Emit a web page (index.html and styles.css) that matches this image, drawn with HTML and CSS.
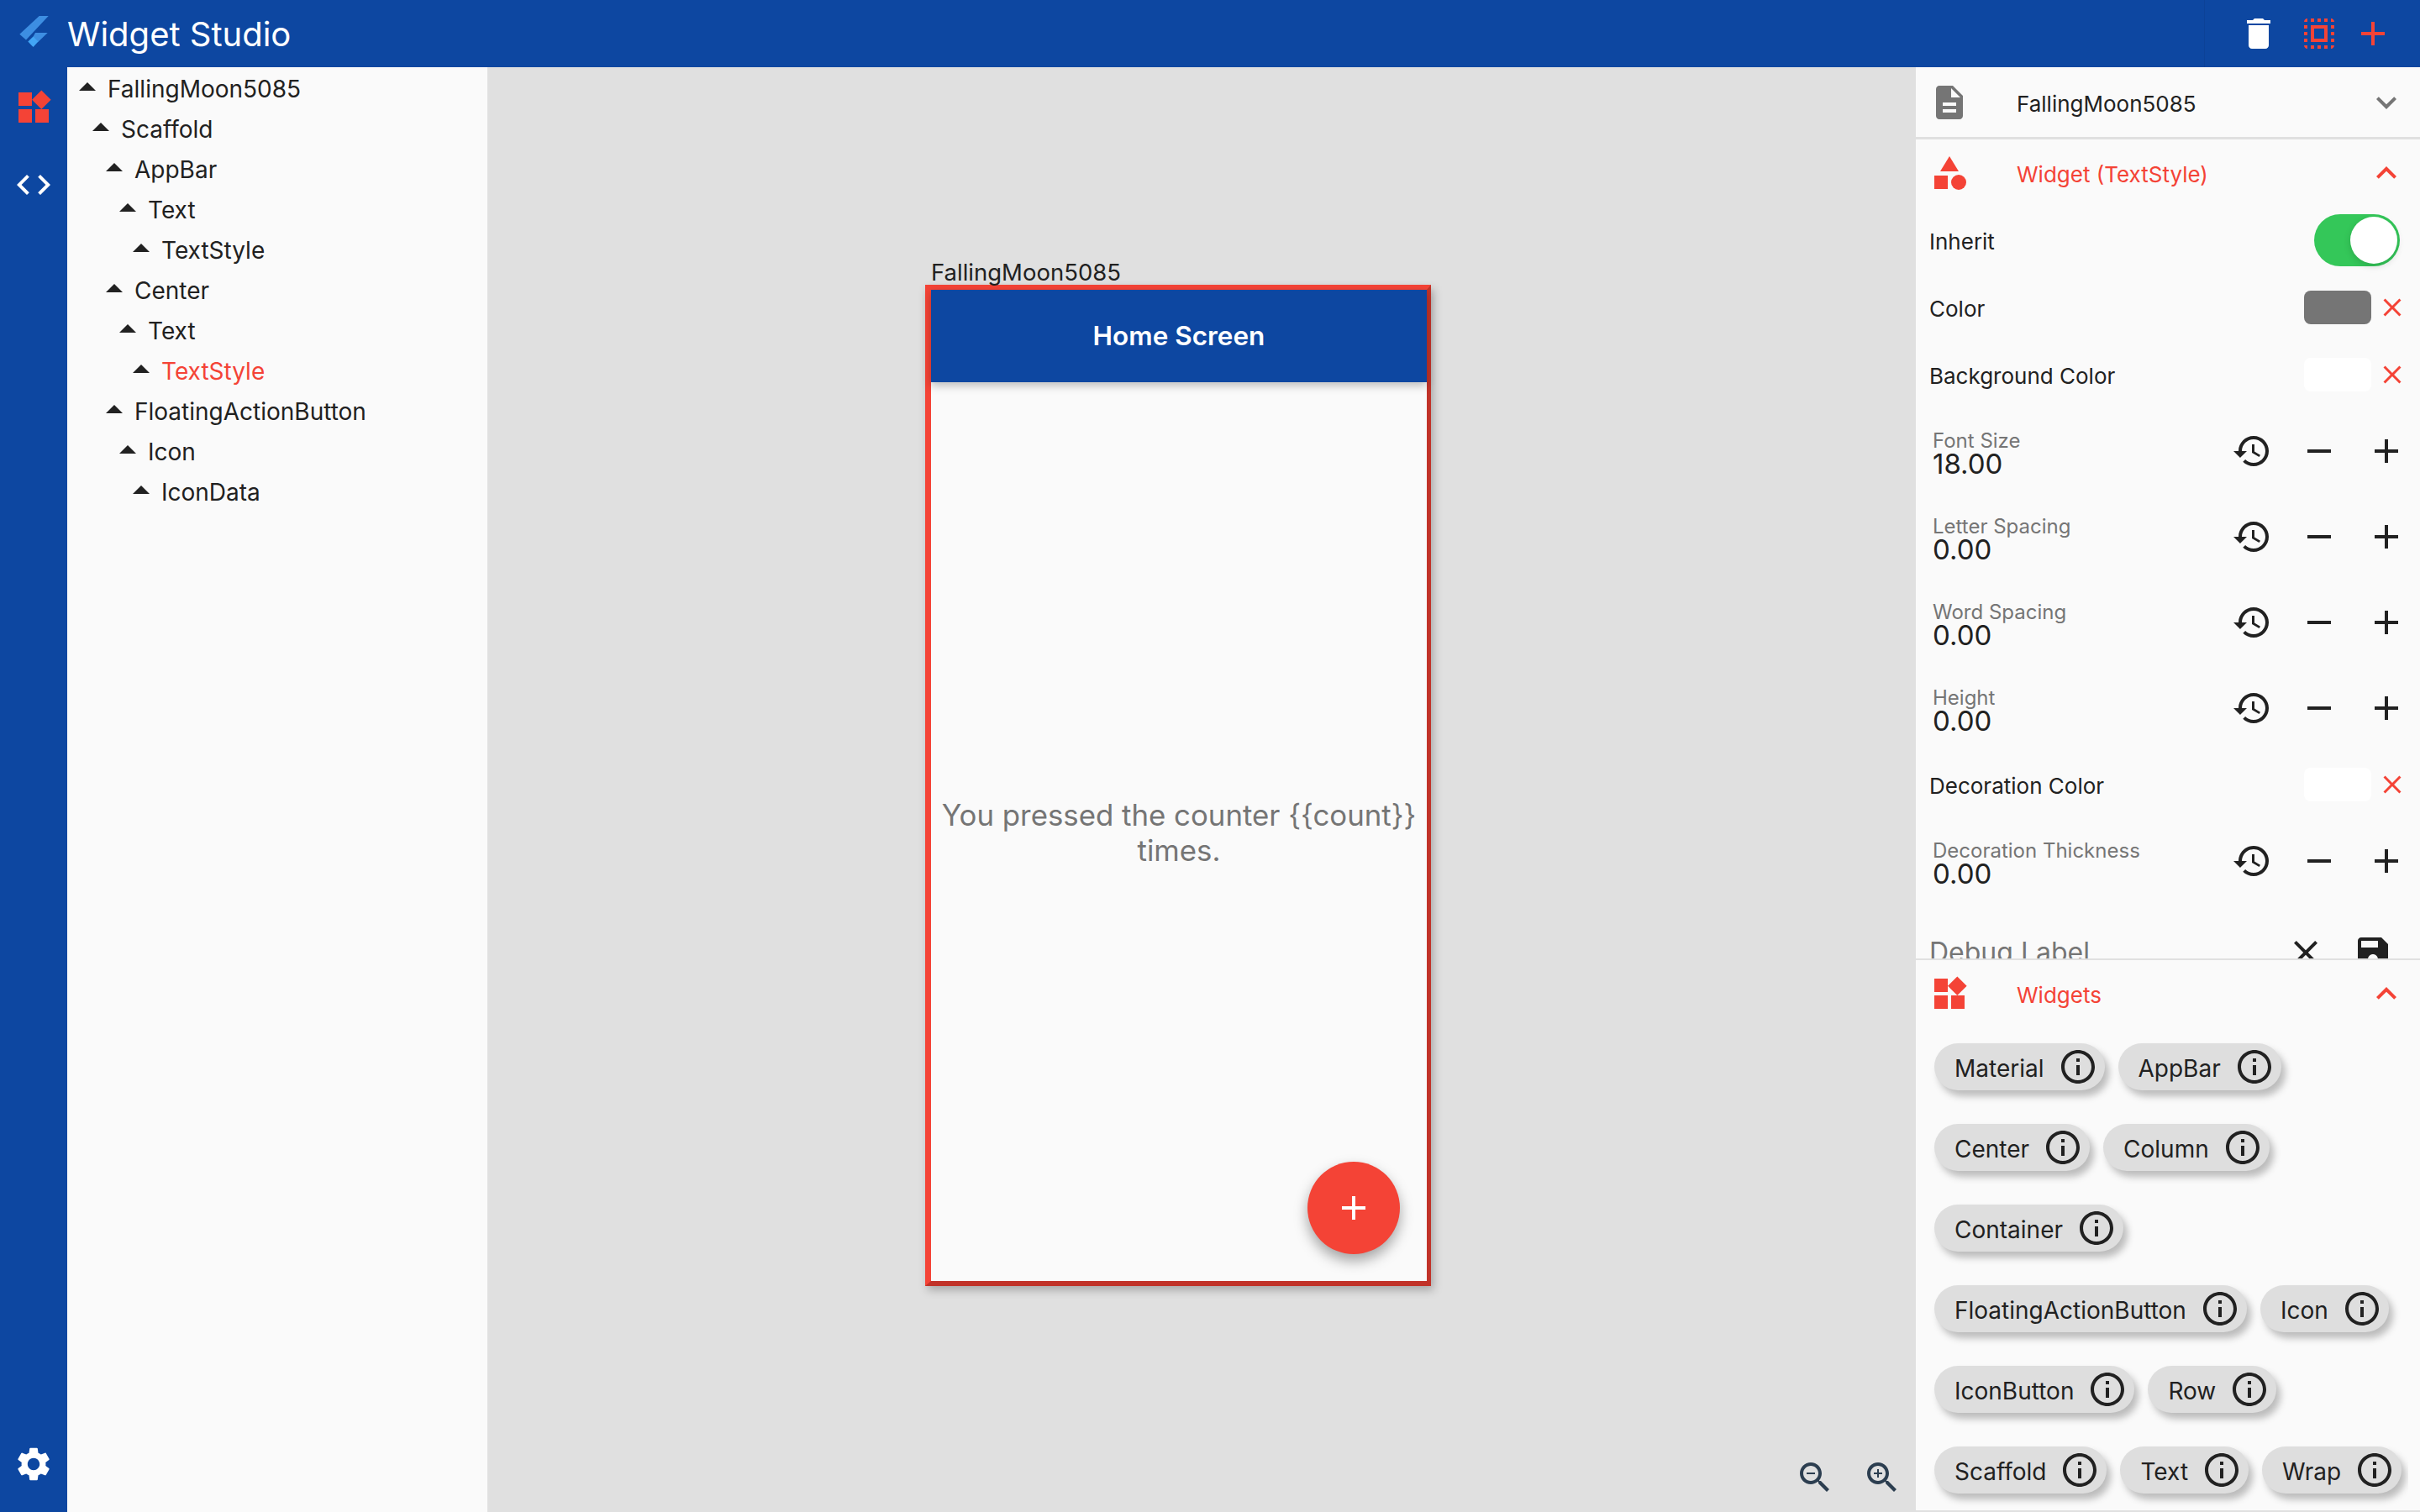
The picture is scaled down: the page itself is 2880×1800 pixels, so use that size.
FILE: index.html
```html
<!DOCTYPE html>
<html lang="en">
<head>
  <meta charset="UTF-8">
  <title>Widget Studio</title>
  <link rel="stylesheet" href="styles.css">
</head>
<body>
  <svg class="icon-defs" xmlns="http://www.w3.org/2000/svg">
    <symbol id="i-delete" viewBox="0 0 24 24"><path d="M6 19c0 1.1.9 2 2 2h8c1.1 0 2-.9 2-2V7H6v12zM19 4h-3.5l-1-1h-5l-1 1H5v2h14V4z"/></symbol>
    <symbol id="i-select" viewBox="0 0 24 24"><path d="M3 5h2V3c-1.1 0-2 .9-2 2zm0 8h2v-2H3v2zm4 8h2v-2H7v2zM3 9h2V7H3v2zm10-6h-2v2h2V3zm6 0v2h2c0-1.1-.9-2-2-2zM5 21v-2H3c0 1.1.9 2 2 2zm-2-4h2v-2H3v2zM9 3H7v2h2V3zm2 18h2v-2h-2v2zm8-8h2v-2h-2v2zm0 8c1.1 0 2-.9 2-2h-2v2zm0-12h2V7h-2v2zm0 8h2v-2h-2v2zm-4 4h2v-2h-2v2zm0-16h2V3h-2v2zM7 17h10V7H7v10zm2-8h6v6H9V9z"/></symbol>
    <symbol id="i-add" viewBox="0 0 24 24"><path d="M19 13h-6v6h-2v-6H5v-2h6V5h2v6h6v2z"/></symbol>
    <symbol id="i-remove" viewBox="0 0 24 24"><path d="M19 13H5v-2h14v2z"/></symbol>
    <symbol id="i-clear" viewBox="0 0 24 24"><path d="M19 6.41L17.59 5 12 10.59 6.41 5 5 6.41 10.59 12 5 17.59 6.41 19 12 13.41 17.59 19 19 17.59 13.41 12z"/></symbol>
    <symbol id="i-widgets" viewBox="0 0 24 24"><path d="M13 13v8h8v-8h-8zM3 21h8v-8H3v8zM3 3v8h8V3H3zm13.66-1.31L11 7.34 16.66 13l5.66-5.66-5.66-5.65z"/></symbol>
    <symbol id="i-code" viewBox="0 0 24 24"><path d="M9.4 16.6L4.8 12l4.6-4.6L8 6l-6 6 6 6 1.4-1.4zm5.2 0l4.6-4.6-4.6-4.6L16 6l6 6-6 6-1.4-1.4z"/></symbol>
    <symbol id="i-settings" viewBox="0 0 24 24"><path d="M19.14 12.94c.04-.3.06-.61.06-.94 0-.32-.02-.64-.07-.94l2.03-1.58c.18-.14.23-.41.12-.61l-1.92-3.32c-.12-.22-.37-.29-.59-.22l-2.39.96c-.5-.38-1.03-.7-1.62-.94l-.36-2.54c-.04-.24-.24-.41-.48-.41h-3.84c-.24 0-.43.17-.47.41l-.36 2.54c-.59.24-1.13.57-1.62.94l-2.39-.96c-.22-.08-.47 0-.59.22L2.74 8.87c-.12.21-.08.47.12.61l2.03 1.58c-.05.3-.09.63-.09.94s.02.64.07.94l-2.03 1.58c-.18.14-.23.41-.12.61l1.92 3.32c.12.22.37.29.59.22l2.39-.96c.5.38 1.03.7 1.62.94l.36 2.54c.05.24.24.41.48.41h3.84c.24 0 .44-.17.47-.41l.36-2.54c.59-.24 1.13-.56 1.62-.94l2.39.96c.22.08.47 0 .59-.22l1.92-3.32c.12-.22.07-.47-.12-.61l-2.01-1.58zM12 15.6c-1.98 0-3.6-1.62-3.6-3.6s1.62-3.6 3.6-3.6 3.6 1.62 3.6 3.6-1.62 3.6-3.6 3.6z"/></symbol>
    <symbol id="i-drop-up" viewBox="0 0 24 24"><path d="M7 14l5-5 5 5z"/></symbol>
    <symbol id="i-doc" viewBox="0 0 24 24"><path d="M14 2H6c-1.1 0-1.99.9-1.99 2L4 20c0 1.1.89 2 1.99 2H18c1.1 0 2-.9 2-2V8l-6-6zm2 16H8v-2h8v2zm0-4H8v-2h8v2zm-3-5V3.5L18.5 9H13z"/></symbol>
    <symbol id="i-more" viewBox="0 0 24 24"><path d="M16.59 8.59L12 13.17 7.41 8.59 6 10l6 6 6-6z"/></symbol>
    <symbol id="i-less" viewBox="0 0 24 24"><path d="M12 8l-6 6 1.41 1.41L12 10.83l4.59 4.58L18 14z"/></symbol>
    <symbol id="i-category" viewBox="0 0 24 24"><path d="M12 2l-5.5 9h11z"/><circle cx="17.5" cy="17.5" r="4.5"/><path d="M3 13.5h8v8H3z"/></symbol>
    <symbol id="i-history" viewBox="0 0 24 24"><path d="M13 3c-4.97 0-9 4.03-9 9H1l3.89 3.89.07.14L9 12H6c0-3.87 3.13-7 7-7s7 3.13 7 7-3.13 7-7 7c-1.93 0-3.68-.79-4.94-2.06l-1.42 1.42C8.27 19.99 10.51 21 13 21c4.97 0 9-4.03 9-9s-4.03-9-9-9zm-1 5v5l4.28 2.54.72-1.21-3.5-2.08V8H12z"/></symbol>
    <symbol id="i-save" viewBox="0 0 24 24"><path d="M17 3H5c-1.11 0-2 .9-2 2v14c0 1.1.89 2 2 2h14c1.1 0 2-.9 2-2V7l-4-4zm-5 16c-1.66 0-3-1.34-3-3s1.34-3 3-3 3 1.34 3 3-1.34 3-3 3zm3-10H5V5h10v4z"/></symbol>
    <symbol id="i-info" viewBox="0 0 24 24"><path d="M11 7h2v2h-2zm0 4h2v6h-2zm1-9C6.48 2 2 6.48 2 12s4.48 10 10 10 10-4.48 10-10S17.52 2 12 2zm0 18c-4.41 0-8-3.59-8-8s3.59-8 8-8 8 3.59 8 8-3.59 8-8 8z"/></symbol>
    <symbol id="i-zoom-out" viewBox="0 0 24 24"><path d="M15.5 14h-.79l-.28-.27C15.41 12.59 16 11.11 16 9.5 16 5.91 13.09 3 9.5 3S3 5.91 3 9.5 5.91 16 9.5 16c1.61 0 3.09-.59 4.23-1.57l.27.28v.79l5 4.99L20.49 19l-4.99-5zm-6 0C7.01 14 5 11.99 5 9.5S7.01 5 9.5 5 14 7.01 14 9.5 11.99 14 9.5 14zM7 9h5v1H7z"/></symbol>
    <symbol id="i-zoom-in" viewBox="0 0 24 24"><path d="M15.5 14h-.79l-.28-.27C15.41 12.59 16 11.11 16 9.5 16 5.91 13.09 3 9.5 3S3 5.91 3 9.5 5.91 16 9.5 16c1.61 0 3.09-.59 4.23-1.57l.27.28v.79l5 4.99L20.49 19l-4.99-5zm-6 0C7.01 14 5 11.99 5 9.5S7.01 5 9.5 5 14 7.01 14 9.5 11.99 14 9.5 14zM12 10h-2v2H9v-2H7V9h2V7h1v2h2v1z"/></symbol>
  </svg>

  <header class="topbar">
    <svg class="logo" viewBox="18 18 44 44" width="44" height="44">
      <path fill="#3d8ee2" d="M23.300 40.700 L46.700 19 L57.700 19 L31 47.500 Z"/>
      <path fill="#3d8ee2" d="M42 39 L56.700 39 L45.300 50 L39.300 44 Z"/>
      <path fill="#42a5f5" d="M33.300 49.500 L39.500 43.500 L45.500 49.500 L39.500 56 Z"/>
    </svg>
    <h1 class="title">Widget Studio</h1>
    <div class="actions">
      <svg class="icon white gap-s"><use href="#i-delete"/></svg>
      <svg class="icon red"><use href="#i-select"/></svg>
      <svg class="icon red"><use href="#i-add"/></svg>
    </div>
  </header>

  <div class="main">
    <nav class="sidebar">
      <svg class="icon red"><use href="#i-widgets"/></svg>
      <svg class="icon white"><use href="#i-code"/></svg>
      <svg class="icon white settings"><use href="#i-settings"/></svg>
    </nav>

    <ul class="tree">
      <li class="tree-row depth-0"><svg class="icon dark"><use href="#i-drop-up"/></svg>FallingMoon5085</li>
      <li class="tree-row depth-1"><svg class="icon dark"><use href="#i-drop-up"/></svg>Scaffold</li>
      <li class="tree-row depth-2"><svg class="icon dark"><use href="#i-drop-up"/></svg>AppBar</li>
      <li class="tree-row depth-3"><svg class="icon dark"><use href="#i-drop-up"/></svg>Text</li>
      <li class="tree-row depth-4"><svg class="icon dark"><use href="#i-drop-up"/></svg>TextStyle</li>
      <li class="tree-row depth-2"><svg class="icon dark"><use href="#i-drop-up"/></svg>Center</li>
      <li class="tree-row depth-3"><svg class="icon dark"><use href="#i-drop-up"/></svg>Text</li>
      <li class="tree-row depth-4 selected"><svg class="icon dark"><use href="#i-drop-up"/></svg>TextStyle</li>
      <li class="tree-row depth-2"><svg class="icon dark"><use href="#i-drop-up"/></svg>FloatingActionButton</li>
      <li class="tree-row depth-3"><svg class="icon dark"><use href="#i-drop-up"/></svg>Icon</li>
      <li class="tree-row depth-4"><svg class="icon dark"><use href="#i-drop-up"/></svg>IconData</li>
    </ul>

    <section class="canvas">
      <div class="frame-label">FallingMoon5085</div>
      <div class="phone">
        <div class="phone-bar">Home Screen</div>
        <div class="phone-body">
          <p class="phone-text">You pressed the counter {{count}} times.</p>
          <div class="fab"><svg class="fab-icon"><use href="#i-add"/></svg></div>
        </div>
      </div>
      <div class="zoom-controls">
        <svg class="icon slate"><use href="#i-zoom-out"/></svg>
        <svg class="icon slate"><use href="#i-zoom-in"/></svg>
      </div>
    </section>

    <aside class="panel">
      <div class="panel-head first">
        <svg class="icon gray"><use href="#i-doc"/></svg>
        <span class="head-text">FallingMoon5085</span>
        <svg class="icon gray"><use href="#i-more"/></svg>
      </div>

      <div class="props">
        <div class="panel-head active">
          <svg class="icon red"><use href="#i-category"/></svg>
          <span class="head-text">Widget (TextStyle)</span>
          <svg class="icon red"><use href="#i-less"/></svg>
        </div>

        <div class="prop-row">
          <span class="prop-name">Inherit</span>
          <div class="switch"><div class="knob"></div></div>
        </div>
        <div class="prop-row">
          <span class="prop-name">Color</span>
          <div class="swatch grey"></div>
          <svg class="clear"><use href="#i-clear"/></svg>
        </div>
        <div class="prop-row">
          <span class="prop-name">Background Color</span>
          <div class="swatch"></div>
          <svg class="clear"><use href="#i-clear"/></svg>
        </div>

        <div class="num-row">
          <div class="num-text"><div class="num-label">Font Size</div><div class="num-value">18.00</div></div>
          <svg class="icon dark"><use href="#i-history"/></svg>
          <svg class="icon dark"><use href="#i-remove"/></svg>
          <svg class="icon dark"><use href="#i-add"/></svg>
        </div>
        <div class="num-row">
          <div class="num-text"><div class="num-label">Letter Spacing</div><div class="num-value">0.00</div></div>
          <svg class="icon dark"><use href="#i-history"/></svg>
          <svg class="icon dark"><use href="#i-remove"/></svg>
          <svg class="icon dark"><use href="#i-add"/></svg>
        </div>
        <div class="num-row">
          <div class="num-text"><div class="num-label">Word Spacing</div><div class="num-value">0.00</div></div>
          <svg class="icon dark"><use href="#i-history"/></svg>
          <svg class="icon dark"><use href="#i-remove"/></svg>
          <svg class="icon dark"><use href="#i-add"/></svg>
        </div>
        <div class="num-row">
          <div class="num-text"><div class="num-label">Height</div><div class="num-value">0.00</div></div>
          <svg class="icon dark"><use href="#i-history"/></svg>
          <svg class="icon dark"><use href="#i-remove"/></svg>
          <svg class="icon dark"><use href="#i-add"/></svg>
        </div>

        <div class="prop-row">
          <span class="prop-name">Decoration Color</span>
          <div class="swatch"></div>
          <svg class="clear"><use href="#i-clear"/></svg>
        </div>

        <div class="num-row">
          <div class="num-text"><div class="num-label">Decoration Thickness</div><div class="num-value">0.00</div></div>
          <svg class="icon dark"><use href="#i-history"/></svg>
          <svg class="icon dark"><use href="#i-remove"/></svg>
          <svg class="icon dark"><use href="#i-add"/></svg>
        </div>

        <div class="debug-row">
          <span class="debug-label">Debug Label</span>
          <svg class="icon dark"><use href="#i-clear"/></svg>
          <svg class="icon dark"><use href="#i-save"/></svg>
        </div>
      </div>

      <div class="panel-head active widgets-head">
        <svg class="icon red"><use href="#i-widgets"/></svg>
        <span class="head-text">Widgets</span>
        <svg class="icon red"><use href="#i-less"/></svg>
      </div>

      <div class="chips">
        <div class="chip">Material<svg class="icon dark"><use href="#i-info"/></svg></div>
        <div class="chip">AppBar<svg class="icon dark"><use href="#i-info"/></svg></div>
        <div class="chip">Center<svg class="icon dark"><use href="#i-info"/></svg></div>
        <div class="chip">Column<svg class="icon dark"><use href="#i-info"/></svg></div>
        <div class="chip">Container<svg class="icon dark"><use href="#i-info"/></svg></div>
        <div class="chip">FloatingActionButton<svg class="icon dark"><use href="#i-info"/></svg></div>
        <div class="chip">Icon<svg class="icon dark"><use href="#i-info"/></svg></div>
        <div class="chip">IconButton<svg class="icon dark"><use href="#i-info"/></svg></div>
        <div class="chip">Row<svg class="icon dark"><use href="#i-info"/></svg></div>
        <div class="chip">Scaffold<svg class="icon dark"><use href="#i-info"/></svg></div>
        <div class="chip">Text<svg class="icon dark"><use href="#i-info"/></svg></div>
        <div class="chip">Wrap<svg class="icon dark"><use href="#i-info"/></svg></div>
      </div>
    </aside>
  </div>
</body>
</html>
```

FILE: styles.css
```css
html, body {
  margin: 0;
  padding: 0;
  height: 100%;
  overflow: hidden;
}

body {
  font-family: Inter, "Noto Sans", sans-serif;
  font-size: 28px;
  color: #212121;
  background-color: #e0e0e0;
  display: flex;
  flex-direction: column;
}

.icon-defs {
  display: none;
}

.icon {
  width: 48px;
  height: 48px;
  flex: none;
  fill: currentColor;
}

.white { color: #fff; }
.red { color: #f44336; }
.dark { color: #212121; }
.gray { color: #757575; }
.slate { color: #2c3e50; }

.topbar {
  height: 80px;
  flex: none;
  display: flex;
  align-items: center;
  background-color: #0d47a1;
}

.logo {
  margin-left: 18px;
  margin-right: 18px;
}

.title {
  margin: 0;
  font-size: 40px;
  font-weight: 400;
  color: #fff;
}

.actions {
  margin-left: auto;
  height: 100%;
  box-sizing: border-box;
  padding-left: 40px;
  padding-right: 32px;
  display: flex;
  align-items: center;
  gap: 16px;
  border-left: 1px solid rgba(0, 0, 0, 0.06);
}

.actions .gap-s {
  margin-right: 8px;
}

.main {
  flex: 1;
  display: flex;
  min-height: 0;
}

.sidebar {
  width: 80px;
  flex: none;
  display: flex;
  flex-direction: column;
  align-items: center;
  box-sizing: border-box;
  padding-top: 24px;
  padding-bottom: 33px;
  gap: 44px;
  background-color: #0d47a1;
}

.settings {
  margin-top: auto;
}

.tree {
  width: 500px;
  flex: none;
  margin: 0;
  padding: 0;
  list-style: none;
  background-color: #fafafa;
}

.tree-row {
  height: 48px;
  display: flex;
  align-items: center;
  padding-top: 3px;
  box-sizing: border-box;
}

.depth-1 { padding-left: 16px; }
.depth-2 { padding-left: 32px; }
.depth-3 { padding-left: 48px; }
.depth-4 { padding-left: 64px; }

.tree-row .icon {
  margin-top: -3px;
}

.tree-row.selected {
  color: #f44336;
}

.canvas {
  flex: 1;
  position: relative;
  box-sizing: border-box;
  padding-top: 228px;
  padding-left: 521px;
}

.frame-label {
  height: 31px;
  line-height: 33px;
  padding-left: 7px;
  font-size: 27.500px;
  white-space: nowrap;
}

.phone {
  width: 602px;
  height: 1192px;
  box-sizing: border-box;
  border-style: solid;
  border-width: 6px 5px 6px 7px;
  border-color: #f44336 #c13329 #c13329 #f44336;
  display: flex;
  flex-direction: column;
  box-shadow: 3px 5px 10px rgba(0, 0, 0, 0.25);
}

.phone-bar {
  height: 110px;
  flex: none;
  box-sizing: border-box;
  padding-bottom: 1px;
  display: flex;
  align-items: center;
  justify-content: center;
  position: relative;
  z-index: 1;
  font-size: 31.500px;
  font-weight: 600;
  color: #fff;
  background-color: #0d47a1;
  box-shadow: 0 4px 10px rgba(0, 0, 0, 0.25);
}

.phone-body {
  flex: 1;
  position: relative;
  display: flex;
  align-items: center;
  justify-content: center;
  background-color: #fafafa;
}

.phone-text {
  margin: 1px 0 0;
  font-size: 34.800px;
  line-height: 42px;
  text-align: center;
  color: #757575;
}

.fab {
  position: absolute;
  right: 32px;
  bottom: 32px;
  width: 110px;
  height: 110px;
  border-radius: 50%;
  display: flex;
  align-items: center;
  justify-content: center;
  background-color: #f44336;
  box-shadow: 0 8px 16px rgba(0, 0, 0, 0.35);
}

.fab-icon {
  width: 48px;
  height: 48px;
  fill: #fff;
}

.zoom-controls {
  position: absolute;
  right: 16px;
  bottom: 17px;
  display: flex;
  gap: 32px;
}

.panel {
  width: 600px;
  flex: none;
  height: 1718px;
  display: flex;
  flex-direction: column;
  background-color: #fafafa;
}

.panel-head {
  height: 80px;
  flex: none;
  display: flex;
  align-items: center;
  box-sizing: border-box;
  padding-left: 16px;
  padding-right: 16px;
}

.panel-head.first {
  height: 86px;
  border-bottom: 3px solid #e0e0e0;
}

.head-text {
  flex: 1;
  margin-left: 56px;
  margin-top: 3px;
  font-size: 26px;
}

.widgets-head .head-text {
  margin-top: 2px;
}

.panel-head.active {
  color: #f44336;
}

.props {
  height: 975px;
  flex: none;
  overflow: hidden;
}

.prop-row {
  height: 80px;
  display: flex;
  align-items: center;
  padding-left: 16px;
  padding-right: 15px;
}

.prop-name {
  flex: 1;
  margin-top: 3px;
  font-size: 26px;
}

.switch {
  width: 102px;
  height: 62px;
  margin-right: 9px;
  box-sizing: border-box;
  padding: 3px;
  display: flex;
  justify-content: flex-end;
  border-radius: 31px;
  background-color: #34c759;
}

.knob {
  width: 56px;
  height: 56px;
  border-radius: 50%;
  background-color: #fff;
  box-shadow: 0 3px 8px rgba(0, 0, 0, 0.15);
}

.swatch {
  width: 80px;
  height: 40px;
  border-radius: 8px;
  background-color: #fff;
}

.swatch.grey {
  background-color: #757575;
}

.clear {
  width: 36px;
  height: 36px;
  margin-left: 7px;
  fill: #f44336;
}

.num-row {
  height: 102px;
  display: flex;
  align-items: center;
  padding-left: 20px;
  padding-right: 16px;
  gap: 32px;
}

.num-text {
  flex: 1;
  margin-top: 3px;
}

.num-label {
  font-size: 24px;
  line-height: 28px;
  color: #757575;
}

.num-value {
  font-size: 33px;
  line-height: 27px;
}

.debug-row {
  height: 96px;
  display: flex;
  padding-left: 16px;
  padding-right: 32px;
  padding-top: 34px;
  gap: 32px;
}

.debug-label {
  flex: 1;
  font-size: 32px;
  line-height: 48px;
  color: #757575;
}

.widgets-head {
  border-top: 2px solid #e0e0e0;
  height: 82px;
}

.chips {
  flex: 1;
  min-height: 0;
  margin-right: 14px;
  overflow: hidden;
  box-sizing: border-box;
  padding-top: 19px;
  padding-left: 22px;
  display: flex;
  flex-wrap: wrap;
  align-content: flex-start;
  column-gap: 16px;
  row-gap: 40px;
}

.chip {
  height: 56px;
  box-sizing: border-box;
  display: flex;
  align-items: center;
  gap: 16px;
  padding-left: 24px;
  padding-right: 8px;
  padding-top: 3px;
  border-radius: 28px;
  background-color: #dedede;
  box-shadow: 5px 7px 8px rgba(0, 0, 0, 0.25);
}

.chip .icon {
  margin-top: -3px;
}
```
